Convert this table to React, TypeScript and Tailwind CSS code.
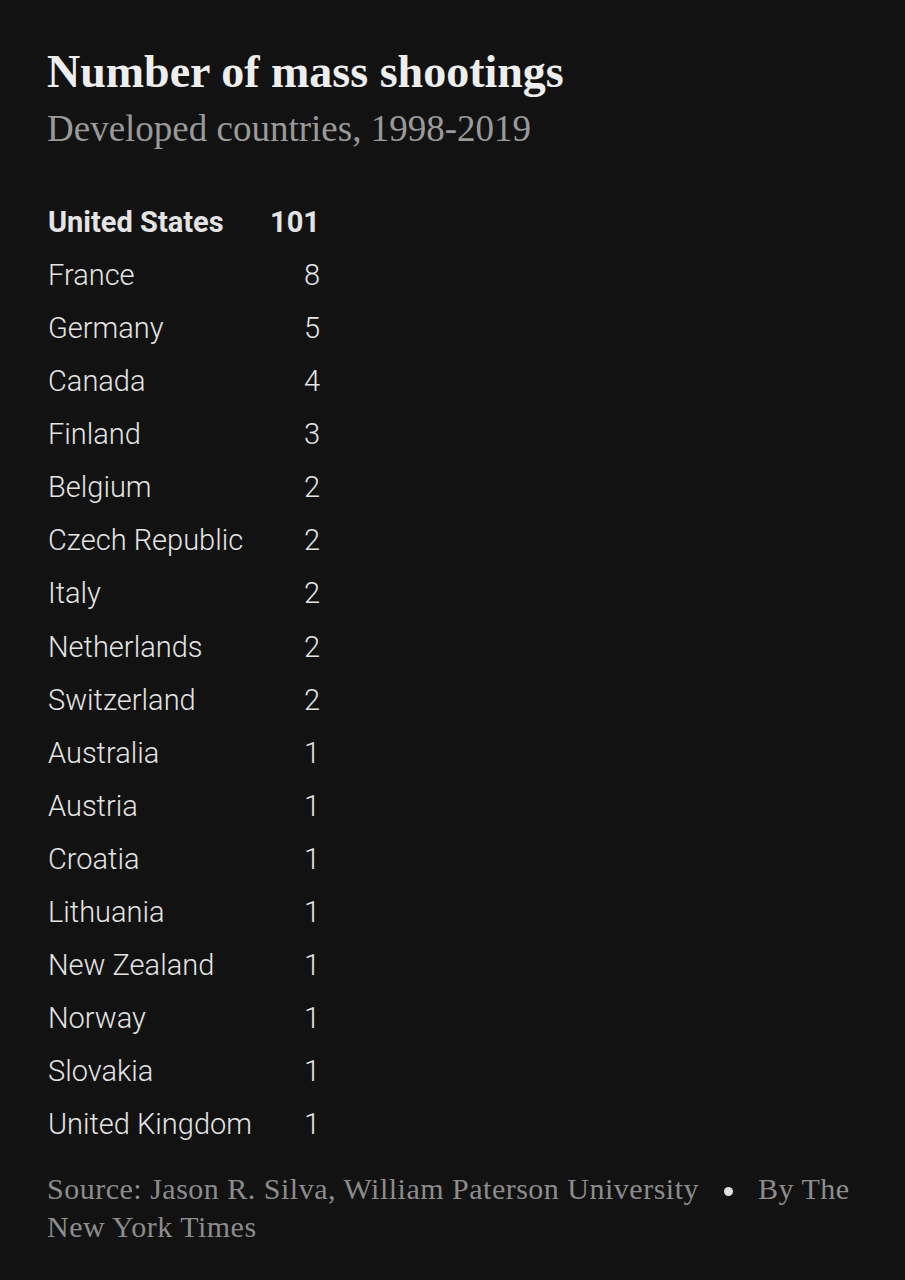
import React from "react";

const rows = [
  { name: "United States", count: 101, bold: true },
  { name: "France", count: 8 },
  { name: "Germany", count: 5 },
  { name: "Canada", count: 4 },
  { name: "Finland", count: 3 },
  { name: "Belgium", count: 2 },
  { name: "Czech Republic", count: 2 },
  { name: "Italy", count: 2 },
  { name: "Netherlands", count: 2 },
  { name: "Switzerland", count: 2 },
  { name: "Australia", count: 1 },
  { name: "Austria", count: 1 },
  { name: "Croatia", count: 1 },
  { name: "Lithuania", count: 1 },
  { name: "New Zealand", count: 1 },
  { name: "Norway", count: 1 },
  { name: "Slovakia", count: 1 },
  { name: "United Kingdom", count: 1 },
];

const App = () => {
  return (
    <div className="min-h-[1280px] w-[905px] bg-[#121212] px-[47px] pt-[42px]">
      <h1 className="font-['Liberation_Serif',serif] text-[46px] font-bold leading-[60px] text-[#eeeeee]">
        Number of mass shootings
      </h1>
      <p className="mt-[2px] font-['Liberation_Serif',serif] text-[37px] leading-[50px] text-[#9a9a9a]">
        Developed countries, 1998-2019
      </p>

      <div className="ml-[1px] mt-[42px] w-[272px] font-['Roboto',sans-serif] text-[29px] text-[#e4e4e4]">
        {rows.map((row) => (
          <div
            key={row.name}
            className={`flex h-[53.1px] items-center justify-between ${
              row.bold ? "font-bold" : "font-light"
            }`}
          >
            <span>{row.name}</span>
            <span>{row.count}</span>
          </div>
        ))}
      </div>

      <p className="mt-[18px] w-[815px] font-['Liberation_Serif',serif] text-[30px] leading-[38px] tracking-[0.5px] text-[#8c8c8c]">
        Source: Jason R. Silva, William Paterson University
        <span className="mx-[25px] inline-block h-[9px] w-[9px] rounded-full bg-[#e0e0e0] align-middle" />
        By The New York Times
      </p>
    </div>
  );
};

export default App;
